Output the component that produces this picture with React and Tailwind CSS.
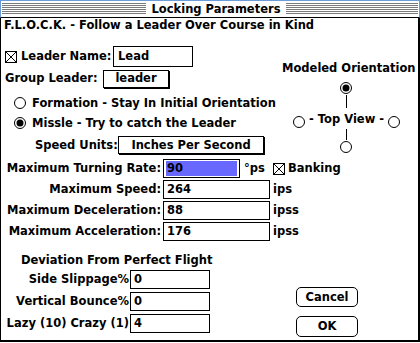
import React from "react";

const Check = () => (
  <svg width="12" height="12" viewBox="0 0 12 12" className="shrink-0">
    <rect x="0.5" y="0.5" width="11" height="11" fill="white" stroke="black" />
    <path d="M1 1L11 11M11 1L1 11" stroke="black" strokeWidth="1" />
  </svg>
);

const Radio = ({ on }) => (
  <svg width="12" height="12" viewBox="0 0 12 12" className="shrink-0">
    <circle cx="6" cy="6" r="5.5" fill="white" stroke="black" />
    {on && <circle cx="6" cy="6" r="3.5" fill="black" />}
  </svg>
);

const Stripes = ({ className }) => (
  <div
    className={
      "h-[11px] mt-[2px] bg-[repeating-linear-gradient(to_bottom,#7a7a7a_0px,#7a7a7a_1px,#ffffff_1px,#ffffff_2px)] " +
      className
    }
  />
);

const Field = ({ w, children }) => (
  <div className={"h-[19px] border border-black bg-white pl-[3px] flex items-center shrink-0 " + w}>
    {children}
  </div>
);

const RLabel = ({ w, children }) => (
  <div className={"flex justify-end shrink-0 " + w}>
    <span className="whitespace-nowrap shrink-0">{children}</span>
  </div>
);

const NumRow = ({ label, value, unit }) => (
  <div className="flex items-center h-[19px] mt-[2px]">
    <RLabel w="w-[160px]">{label}</RLabel>
    <div className="ml-[2px]">
      <Field w="w-[107px]">{value}</Field>
    </div>
    <span className="ml-[3px]">{unit}</span>
  </div>
);

const DevRow = ({ label, value, mt }) => (
  <div className={"flex items-center h-[19px] " + mt}>
    <RLabel w="w-[128px]">{label}</RLabel>
    <div className="ml-[1px]">
      <Field w="w-[80px]">{value}</Field>
    </div>
  </div>
);

export default function App() {
  return (
    <div className="w-[420px] h-[343px] bg-white text-black font-['DejaVu_Sans',Verdana,sans-serif] font-bold text-[11.5px] leading-[15px]">
      <div className="w-[420px] h-[342px] flex flex-col">
        {/* Title bar */}
        <div className="h-[18px] border border-[#6b9bd9] border-b-black flex items-start px-[1px] shrink-0">
          <Stripes className="w-[144px]" />
          <div className="w-[140px] h-[16px] flex items-center justify-center whitespace-nowrap">
            Locking Parameters
          </div>
          <Stripes className="flex-1" />
        </div>

        {/* Body */}
        <div className="flex-1 border-l border-r-2 border-b-2 border-black flex flex-col">
          <div className="pl-[3px] h-[15px] whitespace-nowrap">
            F.L.O.C.K. - Follow a Leader Over Course in Kind
          </div>

          <div className="flex mt-[13px]">
            {/* Left column */}
            <div className="w-[279px] flex flex-col">
              <div className="h-[21px] flex items-center pl-[4px]">
                <Check />
                <span className="w-[96px] pl-[4px] whitespace-nowrap">Leader Name:</span>
                <div className="w-[80px] h-[21px] border border-black pl-[4px] flex items-center">Lead</div>
              </div>
              <div className="h-[19px] mt-[2px] flex items-center pl-[4px]">
                <span className="w-[98px] whitespace-nowrap">Group Leader:</span>
                <div className="w-[66px] h-[18px] border border-black shadow-[1px_1px_0_#000] flex items-center justify-center">
                  leader
                </div>
              </div>
              <div className="h-[20px] mt-[5px] flex items-center pl-[13px]">
                <Radio />
                <span className="ml-[6px] whitespace-nowrap">Formation - Stay In Initial Orientation</span>
              </div>
              <div className="h-[20px] flex items-center pl-[13px]">
                <Radio on />
                <span className="ml-[6px] whitespace-nowrap">Missle - Try to catch the Leader</span>
              </div>
              <div className="h-[18px] mt-[3px] flex items-center pl-[34px]">
                <span className="w-[83px] whitespace-nowrap">Speed Units:</span>
                <div className="w-[146px] h-[18px] border border-black shadow-[1px_1px_0_#000] flex items-center justify-center whitespace-nowrap">
                  Inches Per Second
                </div>
              </div>
            </div>

            {/* Right column: orientation */}
            <div className="flex-1 flex flex-col">
              <div className="mt-[15px] pl-[2px] whitespace-nowrap">Modeled Orientation</div>
              <div className="ml-[13px] flex flex-col">
                <div className="mt-[6px] ml-[47px]">
                  <Radio on />
                </div>
                <div className="mt-[1px] ml-[53px] w-px h-[13px] bg-black" />
                <div className="mt-[4px] h-[16px] flex">
                  <div className="self-end">
                    <Radio />
                  </div>
                  <span className="mx-[4px] whitespace-nowrap">- Top View -</span>
                  <div className="self-end">
                    <Radio />
                  </div>
                </div>
                <div className="mt-[1px] ml-[53px] w-px h-[11px] bg-black" />
                <div className="mt-[1px] ml-[47px]">
                  <Radio />
                </div>
              </div>
            </div>
          </div>

          {/* Turning rate */}
          <div className="flex items-center h-[19px] mt-[5px]">
            <RLabel w="w-[160px]">Maximum Turning Rate:</RLabel>
            <div className="ml-[2px] w-[77px] h-[19px] border border-black px-[2px] py-[1px]">
              <div className="h-full bg-[#6868ff] pl-[1px] flex items-center">90</div>
            </div>
            <span className="ml-[4px] w-[29px]">°ps</span>
            <Check />
            <span className="ml-[3px]">Banking</span>
          </div>
          <NumRow label="Maximum Speed:" value="264" unit="ips" />
          <NumRow label="Maximum Deceleration:" value="88" unit="ipss" />
          <NumRow label="Maximum Acceleration:" value="176" unit="ipss" />

          {/* Deviation */}
          <div className="flex mt-[12px]">
            <div className="w-[210px] flex flex-col">
              <div className="pl-[20px] h-[15px] whitespace-nowrap">Deviation From Perfect Flight</div>
              <DevRow label="Side Slippage%" value="0" mt="mt-[2px]" />
              <DevRow label="Vertical Bounce%" value="0" mt="mt-[3px]" />
              <DevRow label="Lazy (10) Crazy (1)" value="4" mt="mt-[3px]" />
            </div>
            <div className="ml-[85px] flex flex-col">
              <div className="mt-[34px] w-[62px] h-[20px] border border-black rounded-[5px] flex items-center justify-center">
                Cancel
              </div>
              <div className="mt-[9px] w-[62px] h-[21px] border border-black rounded-[5px] flex items-center justify-center">
                OK
              </div>
            </div>
          </div>
        </div>
      </div>
    </div>
  );
}
